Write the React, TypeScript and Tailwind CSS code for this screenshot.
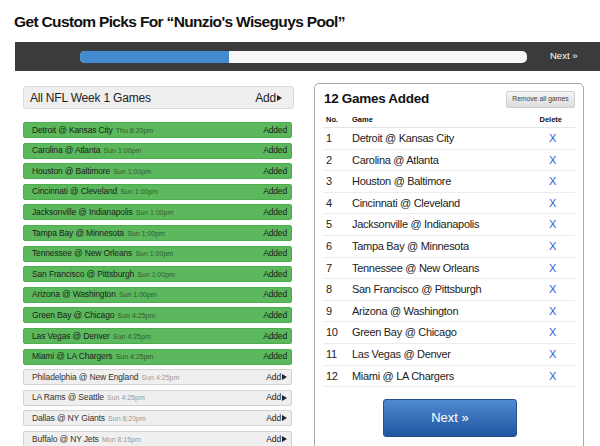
import React from 'react';

interface Game {
  name: string;
  time: string;
  added: boolean;
}

const games: Game[] = [
  { name: 'Detroit @ Kansas City', time: 'Thu 8:20pm', added: true },
  { name: 'Carolina @ Atlanta', time: 'Sun 1:00pm', added: true },
  { name: 'Houston @ Baltimore', time: 'Sun 1:00pm', added: true },
  { name: 'Cincinnati @ Cleveland', time: 'Sun 1:00pm', added: true },
  { name: 'Jacksonville @ Indianapolis', time: 'Sun 1:00pm', added: true },
  { name: 'Tampa Bay @ Minnesota', time: 'Sun 1:00pm', added: true },
  { name: 'Tennessee @ New Orleans', time: 'Sun 1:00pm', added: true },
  { name: 'San Francisco @ Pittsburgh', time: 'Sun 1:00pm', added: true },
  { name: 'Arizona @ Washington', time: 'Sun 1:00pm', added: true },
  { name: 'Green Bay @ Chicago', time: 'Sun 4:25pm', added: true },
  { name: 'Las Vegas @ Denver', time: 'Sun 4:25pm', added: true },
  { name: 'Miami @ LA Chargers', time: 'Sun 4:25pm', added: true },
  { name: 'Philadelphia @ New England', time: 'Sun 4:25pm', added: false },
  { name: 'LA Rams @ Seattle', time: 'Sun 4:25pm', added: false },
  { name: 'Dallas @ NY Giants', time: 'Sun 8:20pm', added: false },
  { name: 'Buffalo @ NY Jets', time: 'Mon 8:15pm', added: false },
];

const Caret = () => (
  <span className="inline-block ml-[1px] w-0 h-0 border-y-[3.5px] border-y-transparent border-l-[5px] border-l-[#222] align-middle" />
);

const App = () => {
  const picked = games.filter((g) => g.added);

  return (
    <div
      className="w-[600px] h-[446px] overflow-hidden bg-white text-[#222]"
      style={{ fontFamily: '"Liberation Sans", Arial, sans-serif' }}
    >
      {/* Title */}
      <h1 className="pl-[14px] pt-[11px] h-[42px] text-[15.5px] tracking-[-0.65px] font-bold leading-[22px] text-[#111]">
        Get Custom Picks For “Nunzio's Wiseguys Pool”
      </h1>

      {/* Progress bar */}
      <div className="ml-[15px] h-[29px] bg-[#3b3b3b] flex items-center">
        <div className="ml-[65px] w-[447px] h-[12px] rounded-[5px] bg-[#f6f6f6] overflow-hidden">
          <div className="h-full w-[149px] bg-[#438bd0]" />
        </div>
        <span className="ml-[23px] text-[9.5px] text-white">Next »</span>
      </div>

      <div className="flex mt-[12px]">
        {/* Left: all games */}
        <div className="ml-[23px] w-[271px] pt-[3px]">
          <div className="h-[23px] rounded-[3px] border border-[#dadada] bg-[#efefef] flex items-center justify-between pl-[6px] pr-[11px] text-[12px] tracking-[-0.2px] text-[#222]">
            <span>All NFL Week 1 Games</span>
            <span className="flex items-center">Add<Caret /></span>
          </div>
          <div className="mt-[13px] w-[269px] flex flex-col gap-[4.6px]">
            {games.map((g) =>
              g.added ? (
                <div key={g.name} className="h-[16px] rounded-[2px] border border-[#4cad4c] bg-[#5cb85c] flex items-center justify-between pl-[8px] pr-[4px] text-[8.5px] tracking-[-0.15px]">
                  <span className="text-[#1d1d1d]">
                    {g.name} <span className="ml-[1px] text-[7px] tracking-normal text-[#2f5c2f]">{g.time}</span>
                  </span>
                  <span className="text-[#1d1d1d]">Added</span>
                </div>
              ) : (
                <div key={g.name} className="h-[16px] rounded-[2px] border border-[#d2d2d2] bg-[#efefef] flex items-center justify-between pl-[8px] pr-[4px] text-[8.5px] tracking-[-0.15px]">
                  <span className="text-[#333]">
                    {g.name} <span className="ml-[1px] text-[7px] tracking-normal text-[#9a9a9a]">{g.time}</span>
                  </span>
                  <span className="flex items-center text-[#222]">Add<Caret /></span>
                </div>
              )
            )}
          </div>
        </div>

        {/* Right: added list */}
        <div className="ml-[20px] w-[270px] h-[400px] rounded-[5px] border border-[#a9a9a9] px-[8px]">
          <div className="flex items-center justify-between h-[29px] pt-[1px]">
            <h2 className="pl-[1px] text-[13.5px] tracking-[-0.3px] font-bold text-[#111]">{picked.length} Games Added</h2>
            <button className="mt-[1px] w-[69px] h-[17px] rounded-[2px] border border-[#d0d0d0] bg-gradient-to-b from-[#f6f6f6] to-[#dcdcdc] text-[6.8px] text-[#444]">
              Remove all games
            </button>
          </div>
          <table className="w-full border-collapse">
            <thead>
              <tr className="h-[14.5px] border-b border-[#e6e6e6] text-[7.5px] font-bold text-[#111]">
                <th className="pl-[3px] w-[29px] text-left font-bold">No.</th>
                <th className="text-left font-bold">Game</th>
                <th className="w-[40px] pr-[13px] text-right font-bold">Delete</th>
              </tr>
            </thead>
            <tbody>
              {picked.map((g, i) => (
                <tr key={g.name} className="h-[21.6px] border-b border-[#ececec] text-[11px] tracking-[-0.3px] text-[#222]">
                  <td className="pl-[3px]">{i + 1}</td>
                  <td>{g.name}</td>
                  <td className="pr-[19px] text-right text-[11px] text-[#2a62d4]">X</td>
                </tr>
              ))}
            </tbody>
          </table>
          <div className="flex justify-center mt-[12px] pl-[2px]">
            <button className="w-[134px] h-[38px] rounded-[3px] border border-[#23508f] bg-gradient-to-b from-[#4f8ad0] to-[#2256a2] text-[13px] text-white">
              Next »
            </button>
          </div>
        </div>
      </div>
    </div>
  );
};

export default App;
